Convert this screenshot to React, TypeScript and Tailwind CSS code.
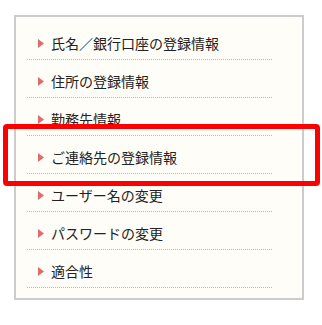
const items = [
  '氏名／銀行口座の登録情報',
  '住所の登録情報',
  '勤務先情報',
  'ご連絡先の登録情報',
  'ユーザー名の変更',
  'パスワードの変更',
  '適合性',
];

function Arrow() {
  return (
    <svg width="6" height="9" viewBox="0 0 6 9" className="shrink-0">
      <polygon points="0,0 6,4.5 0,9" fill="#e26a6a" />
    </svg>
  );
}

export default function App() {
  return (
    <div className="relative w-[322px] h-[325px] bg-white pt-[15px] pl-[14px]" style={{ fontFamily: '"Noto Sans CJK JP", "Noto Sans", sans-serif' }}>
      <div className="w-[290px] h-[285px] border-2 border-[#cccccc] bg-[#fffdf7] pt-[5px] pl-[11px]">
        <ul className="w-[245px]">
          {items.map((label) => (
            <li
              key={label}
              className="h-[38px] border-b border-dotted border-[#bbbbbb] flex items-center pt-[5px] pl-[11px] gap-[7px] text-[14px] text-[#222222]"
            >
              <Arrow />
              <span className="leading-none">{label}</span>
            </li>
          ))}
        </ul>
      </div>
      <div className="absolute left-[3px] top-[124px] w-[317px] h-[62px] border-[5px] border-[#ff0000] rounded-[4px] pointer-events-none" />
    </div>
  );
}
